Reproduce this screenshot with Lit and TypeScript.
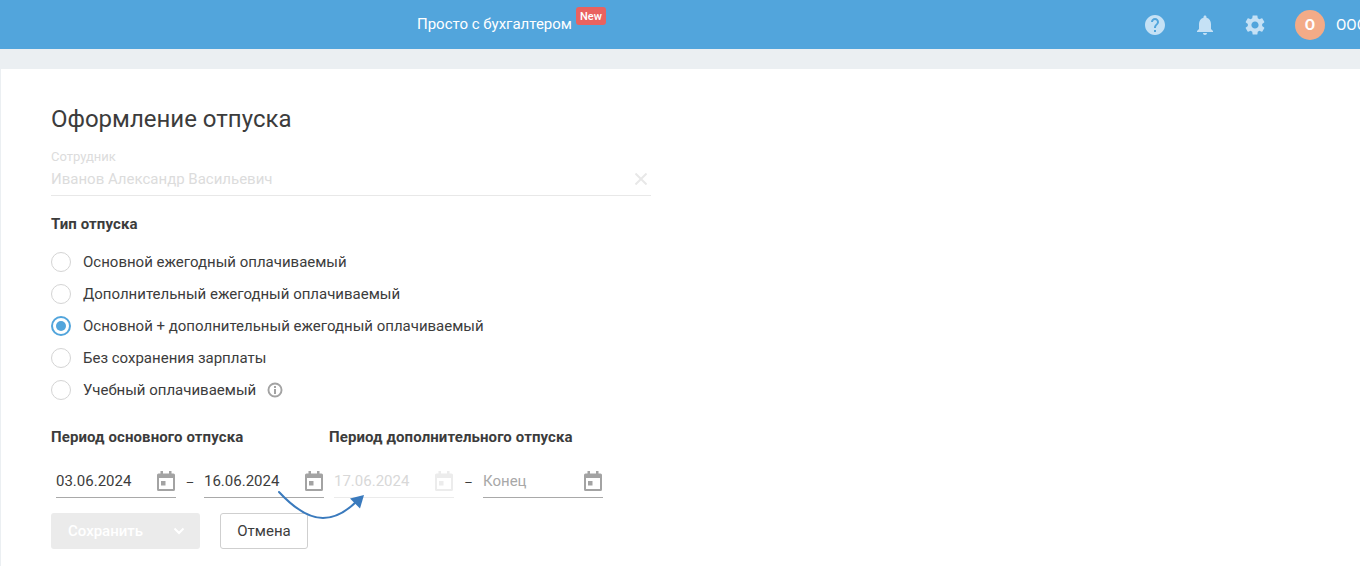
import { LitElement, html, css } from "lit";
import { customElement } from "lit/decorators.js";

const calendar = (cls: string) => html`<svg class="cal ${cls}" width="18" height="20" viewBox="0 0 18 20"><path fill-rule="evenodd" d="M3.500 0h2.500v2.500h6V0h2.500v2.500h2A1.500 1.500 0 0 1 18 4v14.500a1.500 1.500 0 0 1-1.500 1.500h-15A1.500 1.500 0 0 1 0 18.500V4a1.500 1.500 0 0 1 1.500-1.500h2V0zM2 7v11h14V7H2zm2 3h4.500v4.500H4V10z"/></svg>`;

const types = [
  "Основной ежегодный оплачиваемый",
  "Дополнительный ежегодный оплачиваемый",
  "Основной + дополнительный ежегодный оплачиваемый",
  "Без сохранения зарплаты",
  "Учебный оплачиваемый",
];

@customElement("app-root")
export class AppRoot extends LitElement {
  static styles = css`
    :host { display: block; height: 566px; overflow: hidden; background: #ebeff2; font-family: Roboto, "Noto Sans", sans-serif; color: #3c3c3c; }
    * { box-sizing: border-box; }
    .top { height: 49px; background: #52a5dc; display: flex; align-items: center; position: relative; overflow: hidden; }
    .brand { margin-left: 417px; font-size: 15px; color: #fff; display: flex; align-items: center; padding-bottom: 1px; align-self: stretch; }
    .new { align-self: flex-start; margin: 7px 0 0 4px; width: 30px; height: 18px; border-radius: 3px; background: #e9625f; color: #fff; font-size: 11px; font-weight: 500; display: flex; align-items: center; justify-content: center; }
    .tools { margin-left: auto; margin-right: -85px; display: flex; align-items: center; flex: none; width: 300px; }
    .tools svg { fill: #c5e1f5; display: block; flex: none; }
    .t1, .t2 { margin-right: 32px; } .t3 { margin-right: 30px; }
    .avatar { width: 30px; height: 30px; border-radius: 50%; background: #f3ab87; color: #fff; font-weight: 700; font-size: 15px; display: flex; align-items: center; justify-content: center; flex: none; }
    .org { margin-left: 11px; color: #fff; font-size: 15px; white-space: nowrap; }
    .card { margin: 20px 0 0 1px; background: #fff; height: 497px; padding: 34px 50px 0; position: relative; }
    h1 { margin: 0; font-size: 24px; font-weight: 400; line-height: 32px; color: #3c3c3c; }
    .employee { width: 600px; margin-top: 12px; height: 49px; border-bottom: 1px solid #e8e8e8; position: relative; color: #dcdcdc; }
    .employee small { display: block; font-size: 13px; line-height: 14px; padding-top: 3px; height: 17px; }
    .employee span { display: block; font-size: 15px; line-height: 20px; margin-top: 5px; }
    .employee svg { position: absolute; right: 4px; top: 26px; stroke: #e8e8e8; stroke-width: 2; fill: none; }
    h2 { margin: 0; font-size: 15px; font-weight: 700; line-height: 20px; color: #3c3c3c; letter-spacing: .1px; }
    .type-title { margin-top: 18px; }
    .radios { margin-top: 12px; display: flex; flex-direction: column; }
    .radio { height: 32px; display: flex; align-items: center; font-size: 15px; }
    .dot { width: 20px; height: 20px; border-radius: 50%; border: 1px solid #d4d4d4; margin-right: 12px; flex: none; display: flex; align-items: center; justify-content: center; }
    .dot.on { border: 2.5px solid #52a5dc; }
    .dot.on::after { content: ""; width: 10px; height: 10px; border-radius: 50%; background: #52a5dc; }
    .info { margin-left: 11px; fill: #a3a3a3; }
    .periods { display: flex; margin-top: 21px; }
    .periods h2:first-child { width: 278px; }
    .dates { display: flex; margin-top: 13px; padding-left: 5px; }
    .date { width: 120px; height: 38px; border-bottom: 1px solid #a9a9a9; display: flex; align-items: center; justify-content: space-between; padding: 5px 1px 0 0; font-size: 15px; color: #3c3c3c; }
    .date.off { border-color: #ebebeb; color: #d8d8d8; }
    .date.ph { color: #a8a8a8; }
    .cal { fill: #a3a3a3; flex: none; }
    .cal.light { fill: #ececec; }
    .sep { width: 28px; height: 38px; padding-top: 8px; line-height: 30px; text-align: center; font-size: 13px; flex: none; }
    .sep.wide { width: 29px; }
    .gap { width: 10px; flex: none; }
    .actions { display: flex; margin-top: 15px; }
    .save { width: 149px; height: 36px; border-radius: 3px; background: #ebebeb; color: #fff; font-size: 15px; font-weight: 500; display: flex; align-items: center; justify-content: space-between; padding: 0 15px 0 17px; }
    .save svg { stroke: #fff; stroke-width: 2; fill: none; }
    .cancel { margin-left: 20px; width: 88px; height: 36px; border: 1px solid #cfcfcf; border-radius: 3px; display: flex; align-items: center; justify-content: center; font-size: 15px; color: #3c3c3c; }
    .arrow { position: absolute; left: 276px; top: 420px; fill: none; overflow: visible; }
  `;

  render() {
    return html`
      <div class="top">
        <div class="brand">Просто с бухгалтером<span class="new">New</span></div>
        <div class="tools">
          <svg class="t1" width="20" height="20" viewBox="2 2 20 20"><path d="M12 2C6.480 2 2 6.480 2 12s4.480 10 10 10 10-4.480 10-10S17.520 2 12 2zm1 17h-2v-2h2v2zm2.070-7.750l-.9.920C13.450 12.900 13 13.500 13 15h-2v-.5c0-1.100.450-2.100 1.170-2.830l1.240-1.260c.370-.360.590-.860.590-1.410 0-1.100-.9-2-2-2s-2 .9-2 2H8c0-2.210 1.790-4 4-4s4 1.790 4 4c0 .880-.360 1.680-.930 2.250z"/></svg>
          <svg class="t2" width="16" height="20" viewBox="4 2 16 20"><path d="M12 22c1.100 0 2-.9 2-2h-4c0 1.100.890 2 2 2zm6-6v-5c0-3.070-1.640-5.640-4.500-6.320V4c0-.830-.670-1.500-1.500-1.500s-1.500.670-1.500 1.500v.680C7.630 5.360 6 7.920 6 11v5l-2 2v1h16v-1l-2-2z"/></svg>
          <svg class="t3" width="20" height="20" viewBox="2 2 20 20"><path d="M19.140 12.940c.040-.3.060-.610.060-.940 0-.320-.020-.640-.070-.940l2.030-1.580c.180-.140.230-.410.120-.610l-1.920-3.320c-.120-.220-.370-.290-.590-.220l-2.390.960c-.5-.380-1.030-.7-1.620-.940l-.360-2.540c-.040-.240-.240-.410-.480-.410h-3.840c-.240 0-.430.170-.470.410l-.360 2.540c-.590.240-1.130.570-1.620.940l-2.390-.960c-.220-.080-.470 0-.590.220L2.740 8.870c-.120.210-.080.470.120.610l2.030 1.580c-.050.3-.090.630-.090.940s.020.640.070.940l-2.030 1.580c-.180.140-.230.410-.120.610l1.920 3.320c.120.220.370.290.590.220l2.390-.960c.5.380 1.030.7 1.620.940l.360 2.540c.050.240.240.410.480.410h3.840c.240 0 .440-.170.470-.410l.360-2.540c.590-.240 1.130-.560 1.620-.94l2.390.960c.220.080.470 0 .590-.220l1.920-3.320c.120-.220.070-.470-.120-.610l-2.010-1.580zM12 15.600c-1.980 0-3.600-1.620-3.600-3.600s1.620-3.600 3.600-3.600 3.600 1.620 3.600 3.600-1.620 3.600-3.600 3.600z"/></svg>
          <div class="avatar">О</div>
          <div class="org">ООО</div>
        </div>
      </div>
      <div class="card">
        <h1>Оформление отпуска</h1>
        <div class="employee">
          <small>Сотрудник</small>
          <span>Иванов Александр Васильевич</span>
          <svg width="12" height="12" viewBox="0 0 12 12"><path d="M.5.500l11 11M11.500.500l-11 11"/></svg>
        </div>
        <h2 class="type-title">Тип отпуска</h2>
        <div class="radios">
          ${types.map((t, i) => html`<div class="radio"><span class="dot ${i === 2 ? "on" : ""}"></span>${t}${i === 4
            ? html`<svg class="info" width="16" height="16" viewBox="0 0 16 16"><path fill-rule="evenodd" d="M8 .5a7.500 7.500 0 1 1 0 15a7.500 7.500 0 0 1 0-15zM8 2.400a5.600 5.600 0 1 0 0 11.200A5.600 5.600 0 0 0 8 2.400zM7 7h2v5H7V7zm0-3h2v2H7V4z"/></svg>`
            : ""}</div>`)}
        </div>
        <div class="periods"><h2>Период основного отпуска</h2><h2>Период дополнительного отпуска</h2></div>
        <div class="dates">
          <div class="date">03.06.2024${calendar("")}</div>
          <div class="sep">–</div>
          <div class="date">16.06.2024${calendar("")}</div>
          <div class="gap"></div>
          <div class="date off">17.06.2024${calendar("light")}</div>
          <div class="sep wide">–</div>
          <div class="date ph">Конец${calendar("")}</div>
        </div>
        <div class="actions">
          <div class="save">Сохранить<svg width="12" height="8" viewBox="0 0 12 8"><path d="M1.500 1.500L6 6l4.500-4.500"/></svg></div>
          <div class="cancel">Отмена</div>
        </div>
        <svg class="arrow" width="90" height="40" viewBox="0 0 90 40">
          <path d="M2 3C15 17 30 29 46 29C58 29 70 22 80 12" stroke="#3a7abd" stroke-width="2" stroke-linecap="round"/>
          <path d="M87 6L73 9.500L83 19.500Z" fill="#3a7abd"/>
        </svg>
      </div>
    `;
  }
}
